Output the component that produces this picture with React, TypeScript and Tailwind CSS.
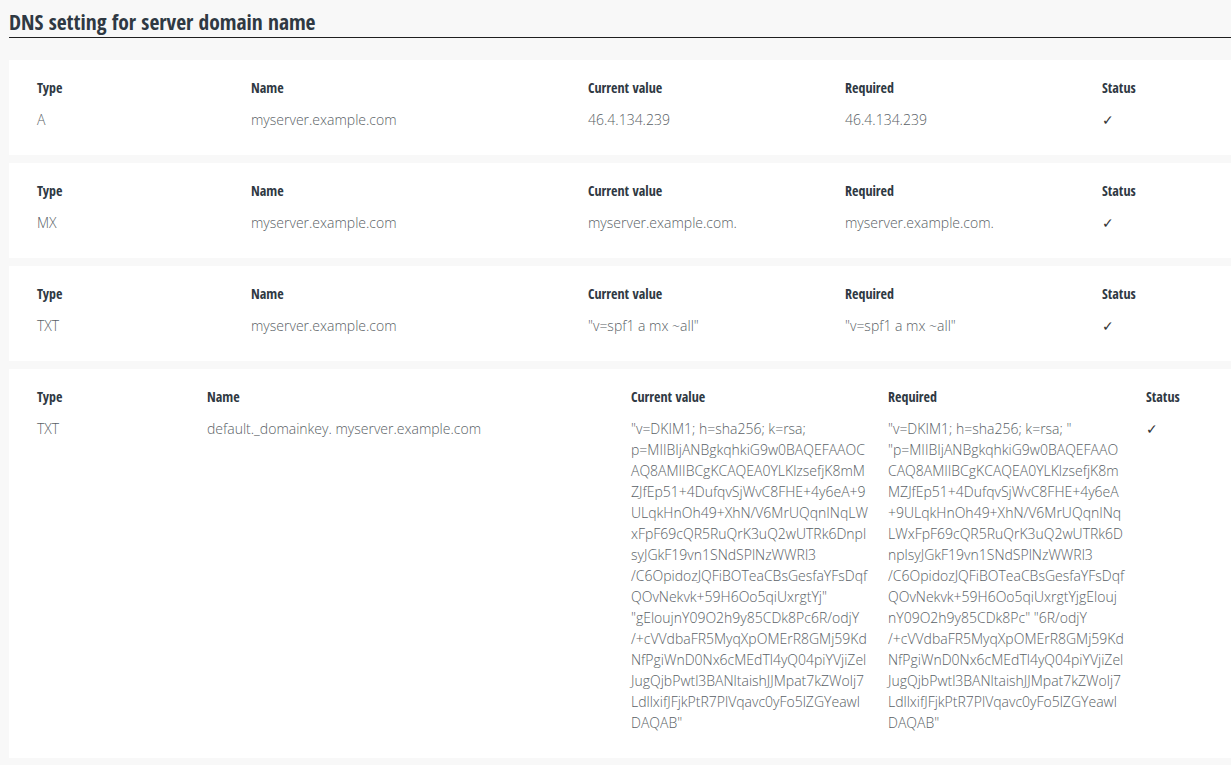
import React from 'react'

type DnsRecord = {
  type: string
  name: string
  current: string[]
  required: string[]
  ok: boolean
}

const records: DnsRecord[] = [
  {
    type: 'A',
    name: 'myserver.example.com',
    current: ['46.4.134.239'],
    required: ['46.4.134.239'],
    ok: true,
  },
  {
    type: 'MX',
    name: 'myserver.example.com',
    current: ['myserver.example.com.'],
    required: ['myserver.example.com.'],
    ok: true,
  },
  {
    type: 'TXT',
    name: 'myserver.example.com',
    current: ['"v=spf1 a mx ~all"'],
    required: ['"v=spf1 a mx ~all"'],
    ok: true,
  },
]

// DKIM key is wrapped by hand so the lines break where the original does
const dkimCurrent = [
  '"v=DKIM1; h=sha256; k=rsa;',
  'p=MIIBIjANBgkqhkiG9w0BAQEFAAOC',
  'AQ8AMIIBCgKCAQEA0YLKlzsefjK8mM',
  'ZJfEp51+4DufqvSjWvC8FHE+4y6eA+9',
  'ULqkHnOh49+XhN/V6MrUQqnINqLW',
  'xFpF69cQR5RuQrK3uQ2wUTRk6Dnpl',
  'syJGkF19vn1SNdSPlNzWWRl3',
  '/C6OpidozJQFiBOTeaCBsGesfaYFsDqf',
  'QOvNekvk+59H6Oo5qiUxrgtYj"',
  '"gEloujnY09O2h9y85CDk8Pc6R/odjY',
  '/+cVVdbaFR5MyqXpOMErR8GMj59Kd',
  'NfPgiWnD0Nx6cMEdTl4yQ04piYVjiZel',
  'JugQjbPwtl3BANltaishJJMpat7kZWolj7',
  'LdllxifJFjkPtR7PlVqavc0yFo5lZGYeawl',
  'DAQAB"',
]

const dkimRequired = [
  '"v=DKIM1; h=sha256; k=rsa; "',
  '"p=MIIBIjANBgkqhkiG9w0BAQEFAAO',
  'CAQ8AMIIBCgKCAQEA0YLKlzsefjK8m',
  'MZJfEp51+4DufqvSjWvC8FHE+4y6eA',
  '+9ULqkHnOh49+XhN/V6MrUQqnINq',
  'LWxFpF69cQR5RuQrK3uQ2wUTRk6D',
  'nplsyJGkF19vn1SNdSPlNzWWRl3',
  '/C6OpidozJQFiBOTeaCBsGesfaYFsDqf',
  'QOvNekvk+59H6Oo5qiUxrgtYjgElouj',
  'nY09O2h9y85CDk8Pc" "6R/odjY',
  '/+cVVdbaFR5MyqXpOMErR8GMj59Kd',
  'NfPgiWnD0Nx6cMEdTl4yQ04piYVjiZel',
  'JugQjbPwtl3BANltaishJJMpat7kZWolj7',
  'LdllxifJFjkPtR7PlVqavc0yFo5lZGYeawl',
  'DAQAB"',
]

const head =
  "font-['Open_Sans_Condensed','Open_Sans',sans-serif] font-stretch-condensed font-bold text-[14px] leading-[20px] text-[#2f3943]"
const cell =
  "font-['Open_Sans',sans-serif] font-light text-[14px] leading-[21px] text-[#5a5f66] whitespace-nowrap"

function Lines({ lines }: { lines: string[] }) {
  return (
    <div className={cell}>
      {lines.map((l, i) => (
        <div key={i}>{l}</div>
      ))}
    </div>
  )
}

function RecordCard({
  record,
  cols,
}: {
  record: DnsRecord
  cols: string
}) {
  return (
    <div className="bg-white pl-[28px] pt-[18px] pb-[25px]">
      <div className={`grid ${cols} gap-y-[11px]`}>
        <div className={head}>Type</div>
        <div className={head}>Name</div>
        <div className={head}>Current value</div>
        <div className={head}>Required</div>
        <div className={head}>Status</div>
        <div className={cell}>{record.type}</div>
        <div className={cell}>{record.name}</div>
        <Lines lines={record.current} />
        <Lines lines={record.required} />
        <div className={`${cell} text-[#333] text-[13px]`}>{record.ok ? '✓' : '✗'}</div>
      </div>
    </div>
  )
}

export default function App() {
  return (
    <div className="min-h-screen bg-[#f8f8f8] pl-[9px] pb-[10px]">
      <h2 className="border-b border-[#1f1f1f] pt-[8px] pb-[1px] font-['Open_Sans_Condensed','Open_Sans',sans-serif] font-stretch-condensed text-[21.5px] font-bold leading-[28px] text-[#2f3943]">
        DNS setting for server domain name
      </h2>
      <div className="mt-[22px] flex flex-col gap-[8px]">
        {records.map((r, i) => (
          <RecordCard
            key={i}
            record={r}
            cols="grid-cols-[214px_337px_257px_257px_1fr]"
          />
        ))}
        <RecordCard
          record={{
            type: 'TXT',
            name: 'default._domainkey. myserver.example.com',
            current: dkimCurrent,
            required: dkimRequired,
            ok: true,
          }}
          cols="grid-cols-[170px_424px_257px_258px_1fr]"
        />
      </div>
    </div>
  )
}
